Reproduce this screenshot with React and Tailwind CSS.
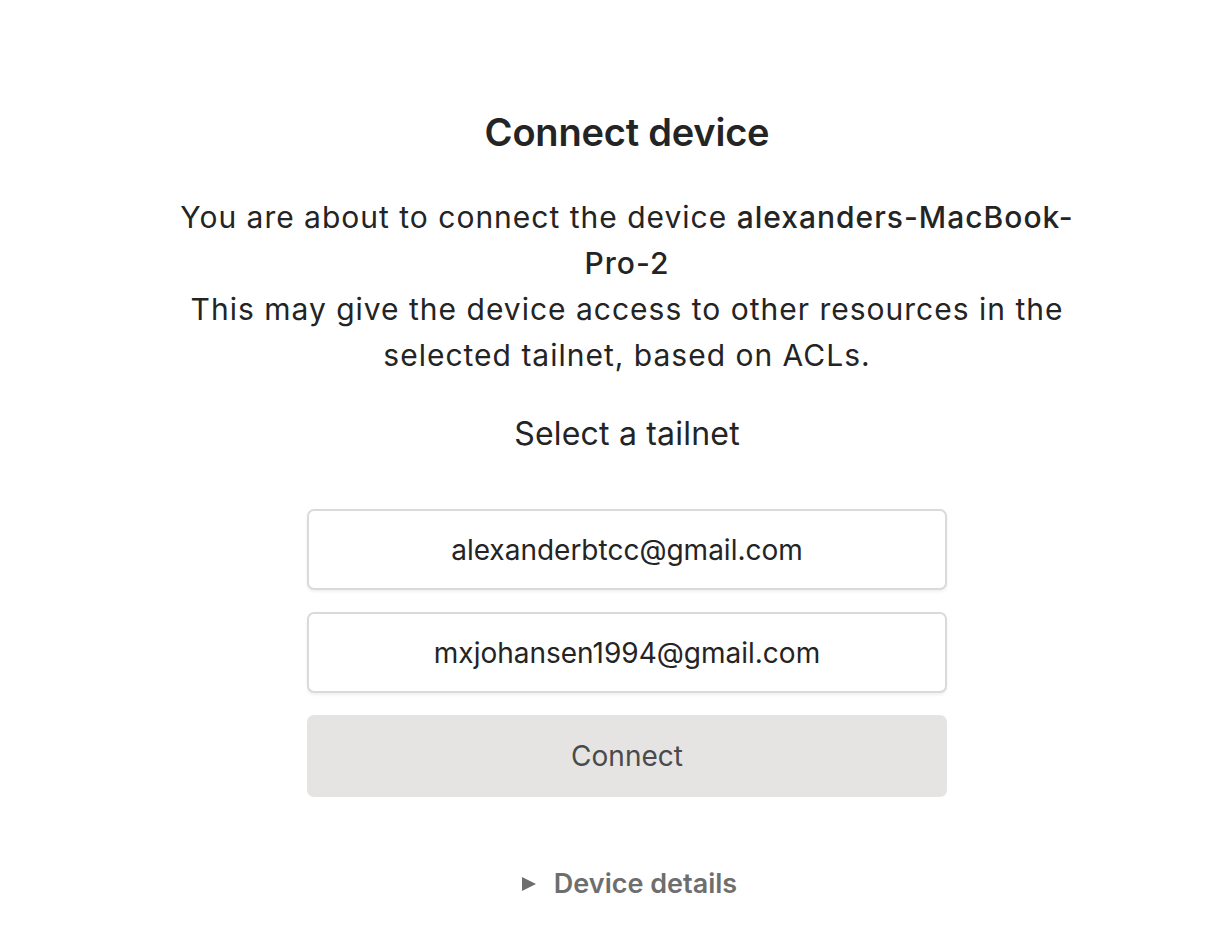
export default function App() {
  return (
    <div className="min-h-[948px] bg-white flex justify-center" style={{ fontFamily: "Inter, 'Noto Sans', sans-serif" }}>
      <div className="ml-[46px] w-[920px] flex flex-col items-center pt-[106px] text-[#242424]">
        <h1 className="text-[38px] leading-[52px] font-semibold tracking-[-0.2px]">Connect device</h1>
        <p className="mt-[36px] text-[30px] leading-[46px] tracking-[1px] text-center w-[905px]">
          You are about to connect the device <span className="font-medium">alexanders-MacBook-Pro-2</span>
          <br />
          This may give the device access to other resources in the selected tailnet, based on ACLs.
        </p>
        <h2 className="mt-[36px] text-[32px] leading-[40px] font-normal tracking-[0.2px]">Select a tailnet</h2>
        <div className="mt-[55px] w-[640px] flex flex-col gap-[22px]">
          <button className="h-[81px] w-full rounded-[7px] border-2 border-[#dadada] bg-white shadow-[0_2px_3px_rgba(0,0,0,0.06)] text-[28px] font-normal text-[#242424]">
            alexanderbtcc@gmail.com
          </button>
          <button className="h-[81px] w-full rounded-[7px] border-2 border-[#dadada] bg-white shadow-[0_2px_3px_rgba(0,0,0,0.06)] text-[28px] font-normal text-[#242424]">
            mxjohansen1994@gmail.com
          </button>
          <button className="h-[82px] w-full rounded-[7px] bg-[#e5e4e3] text-[28px] font-normal text-[#4a4a4a]">
            Connect
          </button>
        </div>
        <div className="mt-[67px] ml-[4px] flex items-center gap-[17px] text-[27px] font-semibold text-[#6e6e6e]">
          <svg width="16" height="16" viewBox="0 0 16 16"><path d="M1 1 L15 8 L1 15 Z" fill="#6e6e6e" /></svg>
          <span>Device details</span>
        </div>
      </div>
    </div>
  );
}
